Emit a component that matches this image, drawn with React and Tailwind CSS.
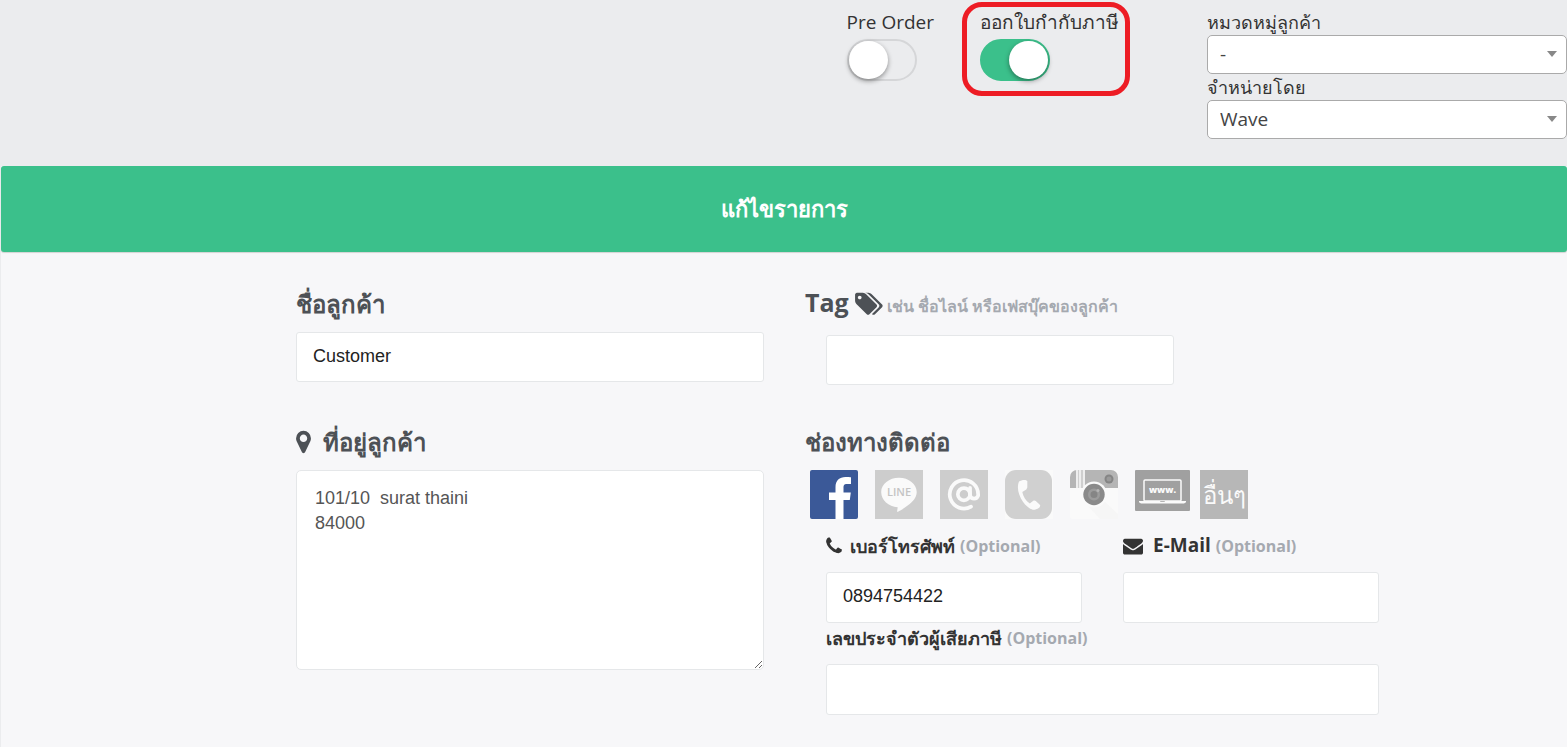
import React, { useState } from "react";

const FONT = "font-['Open_Sans','Noto_Sans',sans-serif]";

const ICON_PATHS = {
  phone:
    "M1600 1240q0 27-10 70.5t-21 68.5q-21 50-122 106-94 51-186 51-27 0-53-3.5t-57.5-12.5-47-14.5-55.5-20.5-49-18q-98-35-175-83-127-79-264-216t-216-264q-48-77-83-175-3-9-18-49t-20.5-55.5-14.5-47-12.5-57.5-3.5-53q0-92 51-186 56-101 106-122 25-11 68.5-21t70.5-10q14 0 21 3 18 6 53 76 11 19 30 54t35 63.5 31 53.5q3 4 17.5 25t21.5 35.5 7 28.5q0 20-28.5 50t-62 55-62 53-28.5 46q0 9 5 22.5t8.5 20.5 14 24 11.5 19q76 137 174 235t235 174q2 1 19 11.5t24 14 20.5 8.5 22.5 5q18 0 46-28.5t53-62 55-62 50-28.5q14 0 28.5 7t35.5 21.5 25 17.5q25 15 53.5 31t63.5 35 54 30q70 35 76 53 3 7 3 21z",
  envelope:
    "M1792 710v794q0 66-47 113t-113 47h-1472q-66 0-113-47t-47-113v-794q44 49 101 87 362 246 497 345 57 42 92.5 65.5t94.5 48 110 24.5h2q51 0 110-24.5t94.5-48 92.5-65.5q170-123 498-345 57-39 100-87zm0-294q0 79-49 151t-122 123q-376 261-468 325-10 7-42.5 30.5t-54 38-52 32.5-57.5 27-50 9h-2q-23 0-50-9t-57.5-27-52-32.5-54-38-42.5-30.5q-91-64-262-182.5t-205-142.5q-62-42-117-115.5t-55-136.5q0-78 41.5-130t118.5-52h1472q65 0 112.5 47t47.5 113z",
  marker:
    "M1152 640q0-106-75-181t-181-75-181 75-75 181 75 181 181 75 181-75 75-181zm256 0q0 109-33 179l-364 774q-16 33-47.5 52t-67.5 19-67.5-19-46.5-52l-365-774q-33-70-33-179 0-212 150-362t362-150 362 150 150 362z",
  tags:
    "M448 448q0-53-37.5-90.5t-90.5-37.5-90.5 37.5-37.5 90.5 37.5 90.5 90.5 37.5 90.5-37.5 37.5-90.5zm1067 576q0 53-37 90l-491 492q-39 37-91 37-53 0-90-37l-715-716q-38-37-64.5-101t-26.5-117v-416q0-52 38-90t90-38h416q53 0 117 26.5t102 64.5l715 714q37 39 37 91zm384 0q0 53-37 90l-491 492q-39 37-91 37-36 0-59-14t-53-45l470-470q37-37 37-90 0-52-37-91l-715-714q-38-38-102-64.5t-117-26.5h224q53 0 117 26.5t102 64.5l715 714q37 39 37 91z",
};

const Icon = ({ name, viewBox = "0 0 1792 1792", className }) => (
  <svg viewBox={viewBox} fill="currentColor" className={className} aria-hidden="true">
    <path d={ICON_PATHS[name]} />
  </svg>
);

const CHANNELS = [
  {
    id: "Facebook",
    width: 48,
    height: 49,
    art: (
      <>
        <rect width="48" height="49" rx="2" fill="#3b5998" />
        <path fill="#fff" d="M25.5 49V30H19v-7.5h6.5V17c0-6.5 4-10 10-10 2.5 0 4.500.2 5.500.3V14h-4c-3 0-3.500 1.500-3.500 3.700v4.800h7.300l-1 7.500h-6.300v19z" />
      </>
    ),
  },
  {
    id: "LINE",
    width: 48,
    height: 49,
    art: (
      <>
        <rect width="48" height="49" fill="#cdcdcd" />
        <path fill="#fafafa" d="M24 7.7c9.8 0 17.7 6.3 17.7 14.2 0 5.5-4 9.8-8.7 13.4-3.500 2.700-7.500 5.200-10 6.500-.8.3-1-.2-.8-1l.5-3.600C13.5 36.600 6.200 30 6.200 21.900 6.200 14 14.200 7.700 24 7.700z" />
        <text x="24" y="26" textAnchor="middle" fontSize="11" fontWeight="600" fill="#c4c4c4" fontFamily="Open Sans">LINE</text>
      </>
    ),
  },
  {
    id: "Email",
    width: 48,
    height: 49,
    art: (
      <>
        <rect width="48" height="49" fill="#cdcdcd" />
        <g transform="translate(6.9 7.2) scale(1.42)" fill="none" stroke="#fafafa" strokeWidth="2.6" strokeLinecap="round">
          <circle cx="12" cy="12" r="4.3" />
          <path d="M16.3 7.5v5.500a3 3 0 0 0 5.700 0v-1a10 10 0 1 0-5 8.700" />
        </g>
      </>
    ),
  },
  {
    id: "Phone",
    width: 48,
    height: 49,
    art: (
      <>
        <rect width="48" height="49" fill="#fafafa" />
        <rect width="47" height="49" rx="11" fill="#d0d0d0" />
        <path fill="#fafafa" d="M14 11.5c1.5-1.3 5-1.900 6.500-1.500l1.800 1v6.500l-1 2-4 2.500c.8 4.500 3.500 9 7.500 11.500l3.500-2.800c1-.4 1.800-.3 2.500.3l4 3.800c.8 1 .3 2-.4 2.600-2 1.800-4.500 2.600-6.500 2.400C19.500 37.500 9.500 22 14 11.500z" />
      </>
    ),
  },
  {
    id: "Instagram",
    width: 48,
    height: 49,
    art: (
      <>
        <rect width="48" height="49" rx="3" fill="#fafafa" />
        <path fill="#b5b5b5" d="M7 0h34a7 7 0 0 1 7 7v11H0V7a7 7 0 0 1 7-7z" />
        <path fill="#eee" d="M6 0h9v18H6z" />
        <path fill="#cfcfcf" d="M8 0h1v18H8zM11 0h2v18h-2z" />
        <path fill="#f6f6f6" d="M33 30l15 14v5H30L17 35z" />
        <circle cx="39" cy="9" r="4.500" fill="#858585" />
        <circle cx="39" cy="9" r="2.500" fill="#9a9a9a" />
        <circle cx="24" cy="24.500" r="13" fill="#fafafa" />
        <circle cx="24" cy="24.500" r="10.700" fill="#8a8a8a" />
        <circle cx="24" cy="24.500" r="6" fill="#9c9c9c" />
        <circle cx="24" cy="24.500" r="3.500" fill="#858585" />
        <circle cx="28" cy="20.500" r="1.500" fill="#b5b5b5" />
      </>
    ),
  },
  {
    id: "Website",
    width: 55,
    height: 41,
    art: (
      <>
        <rect width="55" height="41" rx="1" fill="#a0a0a0" />
        <rect x="9" y="10" width="37" height="21" rx="1" fill="none" stroke="#fafafa" strokeWidth="1.500" />
        <path fill="#fafafa" d="M4 31h47v1.200l-2 1.300H6l-2-1.300z" />
        <path fill="#b5b5b5" d="M25 31h5l-.5 1h-4z" />
        <text x="27.500" y="22.500" textAnchor="middle" fontSize="9" fontWeight="800" fill="#fafafa" fontFamily="Open Sans">www.</text>
      </>
    ),
  },
  {
    id: "Other",
    width: 48,
    height: 49,
    art: (
      <>
        <rect width="48" height="49" fill="#b7b7b7" />
        <text x="24" y="34" textAnchor="middle" fontSize="24" fontWeight="500" fill="#fafafa" fontFamily="Open Sans, Noto Sans, sans-serif">อื่นๆ</text>
      </>
    ),
  },
];

const Toggle = ({ id, label, checked, onChange }) => (
  <div className="flex flex-col items-start">
    <label htmlFor={id} className="text-[19px] leading-6 whitespace-nowrap">{label}</label>
    <input
      id={id}
      type="checkbox"
      role="switch"
      checked={checked}
      onChange={(e) => onChange(e.target.checked)}
      className="mt-[5px] h-[42px] w-[70px] cursor-pointer appearance-none rounded-full border-2 border-[#d5d6d8] transition-colors before:block before:h-[38px] before:w-[39px] before:rounded-full before:bg-white before:shadow-[0_2px_5px_rgba(0,0,0,0.4)] before:transition-transform checked:border-[#3bc08b] checked:bg-[#3bc08b] checked:before:translate-x-[27px]"
    />
  </div>
);

const SelectField = ({ id, label, options }) => (
  <div>
    <label htmlFor={id} className="block text-lg leading-[26px]">{label}</label>
    <div className="relative">
      <select id={id} className="block h-[39px] w-full appearance-none rounded-[5px] border border-[#aaa] bg-white px-3 text-[19px] text-[#444]">
        {options.map((o) => <option key={o}>{o}</option>)}
      </select>
      <svg viewBox="0 0 10 6" className="pointer-events-none absolute top-4 right-2.5 h-1.5 w-2.5" aria-hidden="true">
        <path d="M0 0h10L5 6z" fill="#888" />
      </svg>
    </div>
  </div>
);

const HEADING = "flex h-10 items-center text-2xl font-bold text-[#4d5156]";
const LABEL = "flex h-6 items-center text-lg font-bold whitespace-nowrap text-[#333]";
const INPUT = "block w-full rounded-[3px] border border-[#e5e7e9] bg-white px-4 pb-0.5 font-['Liberation_Sans',sans-serif] text-lg text-[#222]";

const Optional = () => <span className="ml-[5px] text-base text-[#a5a9b0]">(Optional)</span>;

export default function App() {
  const [preOrder, setPreOrder] = useState(false);
  const [taxInvoice, setTaxInvoice] = useState(true);
  const [channel, setChannel] = useState("Facebook");

  return (
    <div className={`flex min-h-screen flex-col bg-[#ebecee] text-[#333] ${FONT}`}>
      {/* Order options */}
      <header className="flex items-start justify-end pb-[27px]">
        <div className="pt-2.5 pr-7">
          <Toggle id="pre-order" label="Pre Order" checked={preOrder} onChange={setPreOrder} />
        </div>
        <div className="mt-0.5 mr-[77px] h-[94px] w-[168px] rounded-[20px] border-[5px] border-[#ed1c24] px-[13px] pt-[3px]">
          <Toggle id="tax-invoice" label="ออกใบกำกับภาษี" checked={taxInvoice} onChange={setTaxInvoice} />
        </div>
        <div className="w-[360px] pt-[9px]">
          <SelectField id="category" label="หมวดหมู่ลูกค้า" options={["-"]} />
          <SelectField id="seller" label="จำหน่ายโดย" options={["Wave"]} />
        </div>
      </header>

      <main className="ml-px flex-1 bg-[#f7f7f9]">
        <h1 className="flex h-[86px] items-center justify-center rounded-[3px] bg-[#3bc08b] pb-0.5 text-[22px] font-bold text-white shadow-[0_1px_1px_rgba(0,0,0,0.15)]">
          แก้ไขรายการ
        </h1>

        <form className="pt-8 pr-[188px] pb-8 pl-[295px]" onSubmit={(e) => e.preventDefault()}>
          <div className="grid grid-cols-[468fr_574fr] gap-x-[41px]">
            <div>
              <label htmlFor="name" className={HEADING}>ชื่อลูกค้า</label>
              <input id="name" type="text" defaultValue="Customer" className={`mt-2 h-[50px] ${INPUT}`} />
            </div>
            <div>
              <label htmlFor="tag" className={HEADING}>
                <span className="pb-0.5 text-[25px]">Tag</span>
                <Icon name="tags" viewBox="0 0 1920 1792" className="ml-1.5 h-[26px] w-7" />
                <span className="ml-1 pt-1 text-base whitespace-nowrap text-[#a5a9b0]">เช่น ชื่อไลน์ หรือเฟสบุ๊คของลูกค้า</span>
              </label>
              <div className="mt-[11px] pr-[205px] pl-[21px]">
                <input id="tag" type="text" className={`h-[50px] ${INPUT}`} />
              </div>
            </div>
          </div>

          <div className="mt-[37px] grid grid-cols-[468fr_574fr] gap-x-[41px]">
            <div>
              <label htmlFor="address" className={HEADING}>
                <Icon name="marker" viewBox="384 0 1024 1792" className="mr-3 h-[26px] w-[15px]" />
                ที่อยู่ลูกค้า
              </label>
              <textarea
                id="address"
                defaultValue={"101/10  surat thaini\n84000"}
                className="mt-2 block h-[200px] w-full rounded-[5px] border border-[#e5e7e9] bg-white px-[18px] py-[15px] font-['Liberation_Sans',sans-serif] text-lg leading-[25px] text-[#555]"
              />
            </div>

            <div>
              <h2 className={HEADING}>ช่องทางติดต่อ</h2>
              <div className="mt-2 flex pl-[5px]">
                {CHANNELS.map((c) => (
                  <div key={c.id} className="h-[49px] w-[65px]">
                    <button type="button" aria-label={c.id} aria-pressed={channel === c.id} onClick={() => setChannel(c.id)} className="block cursor-pointer">
                      <svg width={c.width} height={c.height} viewBox={`0 0 ${c.width} ${c.height}`}>{c.art}</svg>
                    </button>
                  </div>
                ))}
              </div>

              <div className="mt-[15px] grid grid-cols-2 gap-x-[41px] pl-[21px]">
                <div>
                  <label htmlFor="phone" className={LABEL}>
                    <Icon name="phone" className="mr-1.5 -ml-0.5 size-5" />
                    เบอร์โทรศัพท์
                    <Optional />
                  </label>
                  <input id="phone" type="tel" defaultValue="0894754422" className={`mt-3.5 h-[51px] ${INPUT}`} />
                </div>
                <div>
                  <label htmlFor="email" className={LABEL}>
                    <Icon name="envelope" className="mr-2.5 size-5" />
                    <span className="text-[19px]">E-Mail</span>
                    <Optional />
                  </label>
                  <input id="email" type="email" className={`mt-3.5 h-[51px] ${INPUT}`} />
                </div>
                <div className="col-span-2 mt-[3px]">
                  <label htmlFor="tax-id" className={LABEL}>
                    เลขประจำตัวผู้เสียภาษี
                    <Optional />
                  </label>
                  <input id="tax-id" type="text" className={`mt-3.5 h-[51px] ${INPUT}`} />
                </div>
              </div>
            </div>
          </div>
        </form>
      </main>
    </div>
  );
}
